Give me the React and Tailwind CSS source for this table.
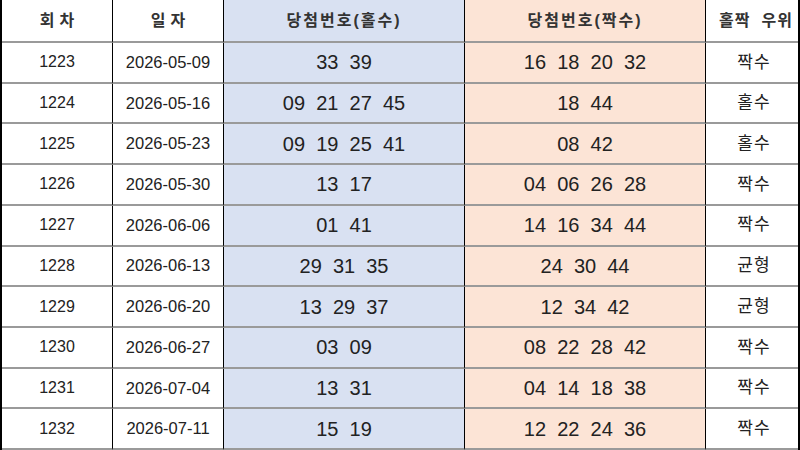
const rows = [
  ["1223", "2026-05-09", "33  39", "16  18  20  32", "짝수"],
  ["1224", "2026-05-16", "09  21  27  45", "18  44", "홀수"],
  ["1225", "2026-05-23", "09  19  25  41", "08  42", "홀수"],
  ["1226", "2026-05-30", "13  17", "04  06  26  28", "짝수"],
  ["1227", "2026-06-06", "01  41", "14  16  34  44", "짝수"],
  ["1228", "2026-06-13", "29  31  35", "24  30  44", "균형"],
  ["1229", "2026-06-20", "13  29  37", "12  34  42", "균형"],
  ["1230", "2026-06-27", "03  09", "08  22  28  42", "짝수"],
  ["1231", "2026-07-04", "13  31", "04  14  18  38", "짝수"],
  ["1232", "2026-07-11", "15  19", "12  22  24  36", "짝수"],
];

const grid = "grid grid-cols-[111px_111px_241px_241px_96px]";
const cell = "flex items-center justify-center border-r border-r-black border-b-2 border-b-[#9a9a9a]";

export default function App() {
  return (
    <div
      className="w-[800px] h-[450px] bg-white flex flex-col border-l-2 border-r-2 border-black overflow-hidden text-[#222]"
      style={{ fontFamily: '"Liberation Sans", Arial, "Noto Sans CJK KR", sans-serif' }}
    >
      <div className={grid + " h-[43px] font-bold text-[16px] text-[#333] tracking-[2px]"}>
        <div className={cell + " tracking-[5px] pl-[5px]"}>회차</div>
        <div className={cell + " tracking-[5px] pl-[5px]"}>일자</div>
        <div className={cell + " bg-[#d9e1f2]"}>당첨번호(홀수)</div>
        <div className={cell + " bg-[#fce4d6]"}>당첨번호(짝수)</div>
        <div className={cell + " border-r-0 tracking-[1px] pl-[4px] text-[16px] whitespace-pre"}>홀짝  우위</div>
      </div>
      {rows.map((r) => (
        <div key={r[0]} className={grid + " flex-1"}>
          <div className={cell + " text-[16px]"}>{r[0]}</div>
          <div className={cell + " text-[16.5px]"}>{r[1]}</div>
          <div className={cell + " bg-[#d9e1f2] text-[20px] whitespace-pre"}>{r[2]}</div>
          <div className={cell + " bg-[#fce4d6] text-[20px] whitespace-pre"}>{r[3]}</div>
          <div className={cell + " border-r-0 text-[17px] tracking-[1px]"}>{r[4]}</div>
        </div>
      ))}
    </div>
  );
}
